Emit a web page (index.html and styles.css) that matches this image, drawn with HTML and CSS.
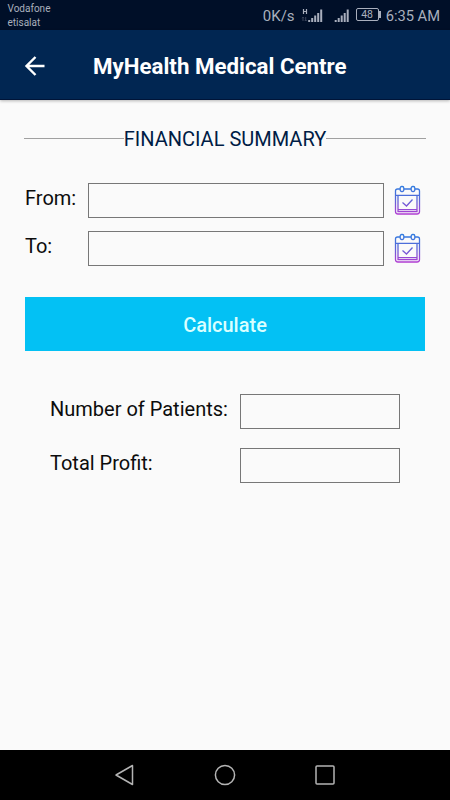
FILE: index.html
```html
<!DOCTYPE html>
<html lang="en">
<head>
<meta charset="utf-8">
<title>MyHealth Medical Centre</title>
<link rel="stylesheet" href="styles.css">
</head>
<body>
<div class="status">
  <div class="carriers"><span>Vodafone</span><span>etisalat</span></div>
  <div class="indicators">
    <span class="speed">0K/s</span>
    <svg class="signal-data" width="22" height="16" viewBox="0 0 22 16">
      <path d="M2.500 1v5M5.500 1v5M2.500 3.500h3" stroke="#a9afbd" stroke-width="1.200" fill="none"/>
      <path d="M2 9v4M4.700 9v4M1 10.200l1-1 1 1M3.700 12l1 1 1-1" stroke="#3c465d" fill="none"/>
      <path d="M7.200 12h2v2h-2zM10.200 10h2v4h-2zM13.200 7.500h2v6.500h-2zM16.200 5h2v9h-2zM19.200 1.500h2v12.500h-2z" fill="#a9afbd"/>
    </svg>
    <svg class="signal" width="16" height="16" viewBox="0 0 16 16">
      <path d="M.7 12h2v2h-2zM3.700 10h2v4h-2zM6.700 7.500h2v6.500h-2zM9.700 5h2v9h-2zM12.700 1.500h2v12.500h-2z" fill="#a9afbd"/>
    </svg>
    <span class="battery">48</span>
    <span class="time">6:35 AM</span>
  </div>
</div>
<header class="appbar">
  <svg class="back" width="22" height="22" viewBox="0 0 22 22"><path d="M20.500 11H3M11.500 2L2.500 11l9 9" fill="none" stroke="#fff" stroke-width="2.400"/></svg>
  <h1>MyHealth Medical Centre</h1>
</header>
<main>
  <h2 class="section">FINANCIAL SUMMARY</h2>
  <div class="dates">
    <label for="from">From:</label>
    <input id="from" type="text">
    <svg class="cal" width="28" height="31" viewBox="0 0 28 31">
      <defs><linearGradient id="g" gradientUnits="userSpaceOnUse" x1="0" y1="1" x2="0" y2="30"><stop offset="0" stop-color="#307ce0"/><stop offset=".45" stop-color="#5668d8"/><stop offset="1" stop-color="#b53ad2"/></linearGradient></defs>
      <g id="calendar" fill="none" stroke="url(#g)" stroke-width="1.300">
        <path d="M6 4H3.500Q1.500 4 1.500 6v20.500Q1.500 29 4 29h19q2.500 0 2.500-2.500V6q0-2-2-2H21M10 4h7M1.500 10.300h24M4 10.500v14.200h19V10.500M4 24.700v2h19v-2"/>
        <rect x="6.200" y="1.500" width="3.600" height="5" rx="1.500"/><rect x="17.200" y="1.500" width="3.600" height="5" rx="1.500"/>
        <path d="M8.500 17.500l4 3.500 6-6.500"/>
      </g>
    </svg>
    <label for="to">To:</label>
    <input id="to" type="text">
    <svg class="cal" width="28" height="31" viewBox="0 0 28 31"><use href="#calendar"/></svg>
  </div>
  <button class="calculate" type="button">Calculate</button>
  <div class="results">
    <label for="patients">Number of Patients:</label><input id="patients" type="text" readonly>
    <label for="profit">Total Profit:</label><input id="profit" type="text" readonly>
  </div>
</main>
<nav class="navbar">
  <svg width="22" height="22" viewBox="0 0 22 22"><path d="M18.500 1.500v19L2 11z"/></svg>
  <svg width="22" height="22" viewBox="0 0 22 22"><circle cx="11" cy="11" r="9.600"/></svg>
  <svg width="22" height="22" viewBox="0 0 22 22"><rect x="2" y="2" width="18" height="18" rx="1"/></svg>
</nav>
</body>
</html>
```
FILE: styles.css
```css
* { box-sizing: border-box; }
body {
  margin: 0;
  height: 800px;
  display: flex;
  flex-direction: column;
  background: #fafafa;
  color: #0c0c0c;
  font-family: Roboto, "Liberation Sans", sans-serif;
  overflow: hidden;
}
.status {
  height: 30px;
  flex: none;
  display: flex;
  justify-content: space-between;
  background: #000f28;
  color: #a9afbd;
}
.carriers {
  display: flex;
  flex-direction: column;
  padding: 2px 0 0 7.500px;
  font-size: 10px;
  line-height: 13.500px;
}
.indicators {
  display: flex;
  align-items: center;
  padding: 1px 10px 0 0;
  white-space: nowrap;
}
.speed { font-size: 15px; }
.signal-data { margin: 0 0 0 6px; }
.signal { margin: 0 0 0 11px; }
.battery {
  position: relative;
  width: 23px;
  height: 13px;
  margin: -2px 7px 0 6px;
  border: 1px solid #a9afbd;
  border-radius: 2px;
  font-size: 10.500px;
  line-height: 11px;
  text-align: center;
}
.battery::after {
  content: "";
  position: absolute;
  left: 22px;
  top: 2px;
  width: 2px;
  height: 7px;
  background: #a9afbd;
}
.time { font-size: 14.700px; }
.appbar {
  height: 70px;
  flex: none;
  display: flex;
  align-items: center;
  padding: 2px 0 0 24px;
  background: #012652;
  border-bottom: 1px solid #001438;
  box-shadow: 0 1px 3px rgba(0, 0, 0, .28);
  color: #fff;
}
h1 {
  margin: 1px 0 0 47px;
  font-size: 22.300px;
  font-weight: 700;
  line-height: 28px;
}
main { flex: 1; padding: 26px 24px 0 24px; }
.section {
  margin: 0;
  display: flex;
  align-items: center;
  color: #001c45;
  font-size: 20px;
  font-weight: 400;
  line-height: 26px;
}
.section::before, .section::after {
  content: "";
  flex: 1;
  height: 1px;
  margin-top: -1px;
  background: #a0a0a0;
}
input {
  width: 100%;
  height: 35px;
  margin: 0;
  padding: 0 8px;
  border: 1px solid #777;
  border-radius: 0;
  background: transparent;
  font: inherit;
  outline: 0;
}
label { font-size: 20px; line-height: 24px; }
.dates {
  display: grid;
  grid-template-columns: 63px 296px 28px;
  row-gap: 13px;
  margin: 31px 0 0 1px;
}
.dates label { padding-top: 3px; }
.cal { margin: 2px 0 0 10px; }
.calculate {
  display: block;
  width: 400px;
  height: 54px;
  margin: 31px 0 0 1px;
  padding: 2px 0 0;
  border: 0;
  background: #03c1f4;
  color: #d9ffff;
  font: 500 20px/24px Roboto, "Liberation Sans", sans-serif;
}
.results {
  display: grid;
  grid-template-columns: 190px 160px;
  row-gap: 19px;
  margin: 43px 0 0 26px;
}
.results label { padding-top: 3px; }
.navbar {
  height: 50px;
  flex: none;
  display: flex;
  justify-content: center;
  align-items: center;
  gap: 78px;
  background: #000;
}
.navbar svg { fill: none; stroke: #b4b4b4; stroke-width: 1.500; stroke-linejoin: round; }
```
